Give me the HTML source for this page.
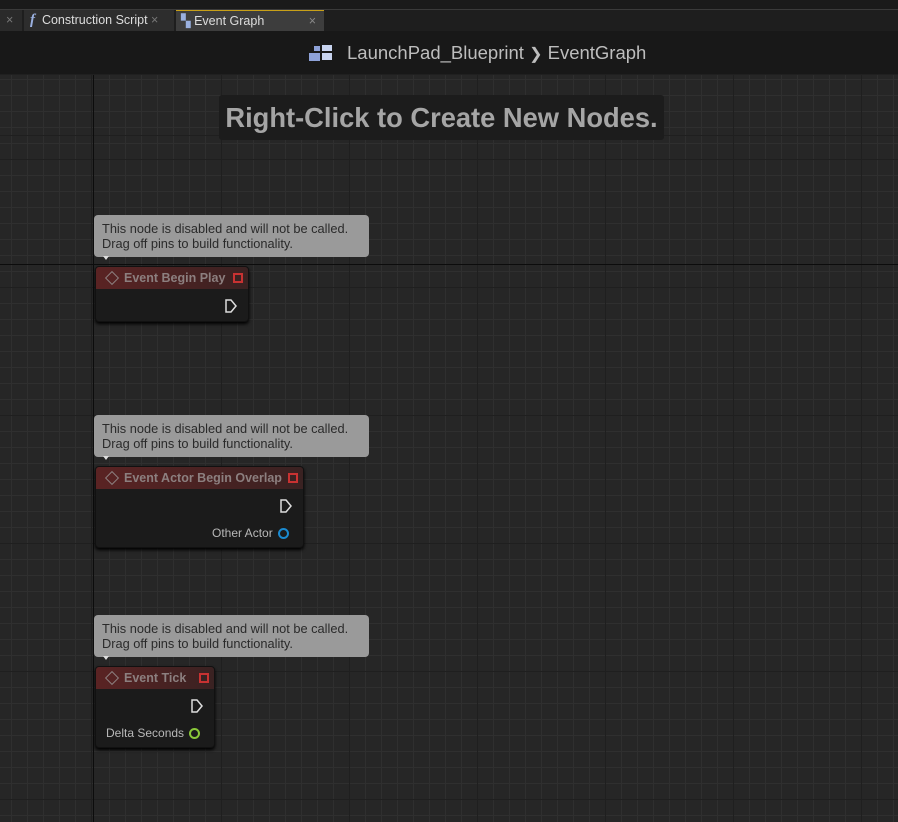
<!DOCTYPE html>
<html><head><style>
*{margin:0;padding:0;box-sizing:border-box}
body{width:898px;height:822px;overflow:hidden;background:#262626;font-family:"Liberation Sans",sans-serif;position:relative}
.grid{position:absolute;left:0;top:30px;width:898px;height:792px;
background-image:
repeating-linear-gradient(90deg,#1f1f1f 0 1px,transparent 1px 128px),
repeating-linear-gradient(0deg,#1f1f1f 0 1px,transparent 1px 128px),
repeating-linear-gradient(90deg,#2f2f2f 0 1px,transparent 1px 16px),
repeating-linear-gradient(0deg,#2f2f2f 0 1px,transparent 1px 16px);
background-position:93px 0,0 106px,93px 0,0 10px;}
.vline{position:absolute;left:93px;top:30px;width:1px;height:792px;background:#0c0c0c}
.hline{position:absolute;left:0;top:264px;width:898px;height:1px;background:#0c0c0c}
.top{position:absolute;left:0;top:0;width:898px;height:10px;background:#1a1a1a;border-bottom:1px solid #3a3a3a}
.tabs{position:absolute;left:0;top:10px;width:898px;height:21px;background:#1e1e1e}
.tab{position:absolute;top:0;height:21px;font-size:12.5px;color:#ddd;line-height:20px}
.hdr{position:absolute;left:0;top:31px;width:898px;height:44px;background:#181818;border-bottom:1px solid #202020}
.hdr .t{position:absolute;left:347px;top:11px;font-size:18.5px;color:#bdbdbd}
.hint{position:absolute;left:219px;top:95px;width:445px;height:45px;background:#1c1c1c;border-radius:3px;color:#a5a5a5;font:bold 27.3px "Liberation Sans",sans-serif;text-align:center;line-height:45px}
.bub{position:absolute;left:94px;width:275px;height:42px;background:#9a9a9a;border-radius:4px;color:#2a2a2a;font-size:12.8px;line-height:15px;padding:6px 8px}
.bub:after{content:"";position:absolute;left:9px;bottom:-6px;border:3px solid transparent;border-top:4px solid #ddd}
.node{position:absolute;left:95px;background:#1b1b1b;border-radius:4px;box-shadow:0 2px 3px #000;border:1px solid #111}
.nh{height:22px;background:linear-gradient(90deg,#5a2323,#3a2222);border-radius:3px 3px 0 0;color:#8c7f7f;font-weight:bold;font-size:12.5px;line-height:22px;padding-left:28px;position:relative}
.nh:before{content:"";position:absolute;left:11px;top:6px;width:8px;height:8px;border:1.5px solid #8c7f7f;transform:rotate(45deg)}
.sq{position:absolute;right:5px;top:6px;width:10px;height:10px;border:2px solid #c83232;background:#3a2222}
.exec{position:absolute;width:13px;height:14px}
.lbl{position:absolute;font-size:12px;color:#b8b8b8}
.pin{position:absolute;width:11px;height:11px;border-radius:50%;border:2px solid}
</style></head><body>
<div class="grid"></div><div class="vline"></div><div class="hline"></div>
<div class="top"></div>
<div class="tabs">
 <div class="tab" style="left:0;width:22px;background:#2a2a2a;color:#777;padding-left:6px">×</div>
 <div class="tab" style="left:24px;width:150px;background:#2d2d2d;padding-left:6px"><span style="font:italic bold 15px 'Liberation Serif',serif;color:#9ab0e0">f</span>&nbsp; Construction Script <span style="color:#777">×</span></div>
 <div class="tab" style="left:176px;width:148px;background:#3d3d3d;border-top:1px solid #c8a018;padding-left:5px"><span style="color:#9ab0e0">▚</span> Event Graph<span style="position:absolute;right:8px;color:#888">×</span></div>
</div>
<div class="hdr">
 <svg style="position:absolute;left:309px;top:13px" width="24" height="18"><rect x="0" y="9" width="11" height="8" fill="#8ea2d8"/><rect x="5" y="2" width="6" height="5" fill="#8ea2d8"/><rect x="13" y="1" width="10" height="6" fill="#c8d4f0"/><rect x="13" y="9" width="10" height="7" fill="#c8d4f0"/></svg>
 <div class="t">LaunchPad_Blueprint <span style="font-size:16px">&#x276F;</span> EventGraph</div>
</div>
<div class="hint">Right-Click to Create New Nodes.</div>

<div class="bub" style="top:215px">This node is disabled and will not be called.<br>Drag off pins to build functionality.</div>
<div class="node" style="top:266px;width:154px;height:56px"><div class="nh">Event Begin Play<div class="sq"></div></div>
<svg class="exec" style="left:129px;top:32px" viewBox="0 0 13 14"><path d="M1 1H6L11 7L6 13H1Z" fill="none" stroke="#ddd" stroke-width="1.5"/></svg></div>

<div class="bub" style="top:415px">This node is disabled and will not be called.<br>Drag off pins to build functionality.</div>
<div class="node" style="top:466px;width:209px;height:82px"><div class="nh">Event Actor Begin Overlap<div class="sq"></div></div>
<svg class="exec" style="left:184px;top:32px" viewBox="0 0 13 14"><path d="M1 1H6L11 7L6 13H1Z" fill="none" stroke="#ddd" stroke-width="1.5"/></svg>
<div class="lbl" style="left:116px;top:59px">Other Actor</div><div class="pin" style="left:182px;top:61px;border-color:#1a8ad0"></div></div>

<div class="bub" style="top:615px">This node is disabled and will not be called.<br>Drag off pins to build functionality.</div>
<div class="node" style="top:666px;width:120px;height:82px"><div class="nh">Event Tick<div class="sq"></div></div>
<svg class="exec" style="left:95px;top:32px" viewBox="0 0 13 14"><path d="M1 1H6L11 7L6 13H1Z" fill="none" stroke="#ddd" stroke-width="1.5"/></svg>
<div class="lbl" style="left:10px;top:59px">Delta Seconds</div><div class="pin" style="left:93px;top:61px;border-color:#8ac83a"></div></div>
</body></html>
